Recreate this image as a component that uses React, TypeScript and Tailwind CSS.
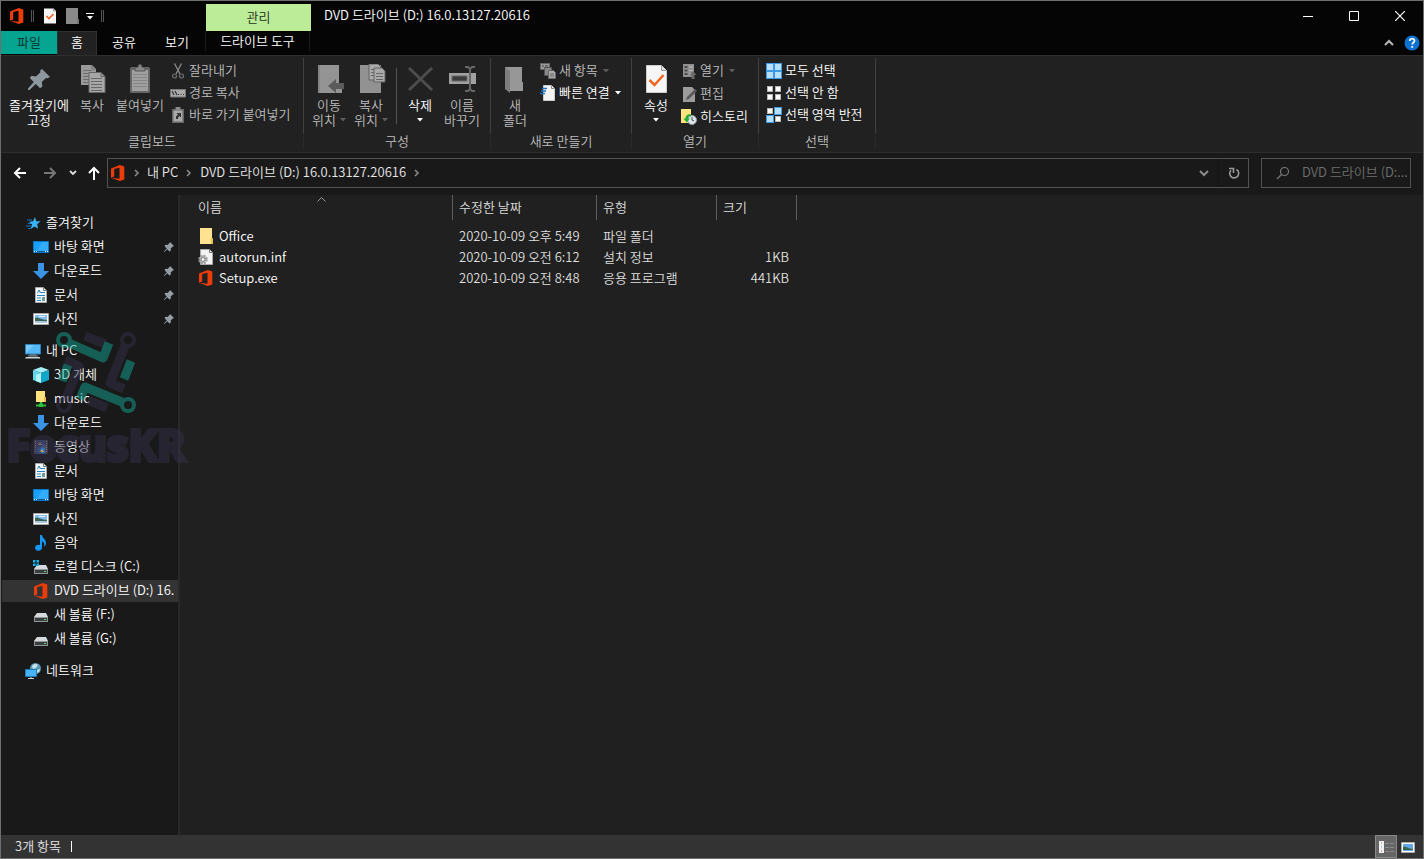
import React from "react";

type P = { className?: string };

const Svg = ({ w = 16, h = 16, children }: { w?: number; h?: number; children: React.ReactNode }) => (
  <svg width={w} height={h} viewBox={`0 0 ${w} ${h}`} fill="none" className="shrink-0" aria-hidden="true">
    {children}
  </svg>
);

/* ---------- shared icons ---------- */

const OfficeIcon = () => (
  <Svg>
    <path d="M1 3.500 9.800.1 14.300 1.400v13.200l-4.500 1.300L1 12.700l8.500 1V2.700L4.200 4v7.500L1 12.700z" fill="#eb3c0a" />
  </Svg>
);

const CheckPage = () => (
  <Svg>
    <path d="M2 .5h9.500L14 3v12.500H2z" fill="#f4f4f4" />
    <path d="M11.500.5V3H14" stroke="#999" />
    <path d="m4.500 8 2.500 2.500L11.500 6" stroke="#f0641e" strokeWidth="1.600" />
  </Svg>
);

const GreyFolder = () => (
  <Svg>
    <path d="M2 0h12v11h1v5H2z" fill="#8a8a8a" />
    <path d="M13 11h2v5h-2z" fill="#777" />
  </Svg>
);

const Caret = ({ className = "" }: P) => (
  <svg width="6" height="4" viewBox="0 0 6 4" className={`shrink-0 ${className}`} aria-hidden="true">
    <path d="M0 0h6L3 3.500z" fill="currentColor" />
  </svg>
);

const Chevron = ({ className = "" }: P) => (
  <svg width="6" height="8" viewBox="0 0 6 8" fill="none" className={`shrink-0 ${className}`} aria-hidden="true">
    <path d="m1 1 3 3-3 3" stroke="#8c8c8c" strokeWidth="1.500" />
  </svg>
);

/* ---------- large ribbon icons ---------- */

const PinLarge = () => (
  <Svg w={32} h={32}>
    <path d="m19 5 8 8-2.500 1.200-1.500-.3-4.200 4.200.6 4.400-2.300 1.700-4.300-4.300L6.500 26H5v-1.500l5.800-6.500-4-4 1.800-2.200 4.300.6L17.400 8.300 17.200 6.600z" fill="#8d979e" />
  </Svg>
);

const CopyLarge = () => (
  <Svg w={32} h={32}>
    <path d="M5 1h11l4 4v16H5z" fill="#9a9a9a" />
    <path d="M16 1v4h4" stroke="#666" />
    <path d="M7 6.500h9M7 9.500h9M7 12.500h9M7 15.500h9M7 18.500h9" stroke="#6d6d6d" />
    <path d="M13 8.500h12l4 4v16H13z" fill="#a6a6a6" stroke="#666" />
    <path d="M25 8.500v4h4" stroke="#666" />
    <path d="M15 14.500h11M15 17.500h11M15 20.500h11M15 23.500h11M15 26.500h11" stroke="#686868" />
  </Svg>
);

const PasteLarge = () => (
  <Svg w={32} h={32}>
    <rect x="6" y="3" width="20" height="26" rx="1.500" fill="#666" />
    <path d="M8 6h16v21H8z" fill="#a0a0a0" />
    <path d="M9 10.500h14M9 13.500h14M9 16.500h14M9 19.500h14M9 22.500h14" stroke="#868686" />
    <path d="M11 7V4l3-1 1-2.500h2L18 3l3 1v3z" fill="#888" stroke="#555" />
  </Svg>
);

const MoveLarge = () => (
  <Svg w={32} h={32}>
    <path d="M5 1h21v19h3v9H5z" fill="#949494" />
    <path d="M5 1h2v28H5z" fill="#858585" />
    <path d="m15 22 8-7v4h8v6h-8v4z" fill="#5b5b5b" />
  </Svg>
);

const CopyToLarge = () => (
  <Svg w={32} h={32}>
    <path d="M5 1h21v28H5z" fill="#929292" />
    <path d="M14 0h9l3 3v13H14z" fill="#aaa" stroke="#626262" />
    <path d="M16 5.500h7M16 8.500h7M16 11.500h7" stroke="#666" />
    <path d="M19 4h8l3 3v11H19z" fill="#aaa" stroke="#626262" />
    <path d="M21 9.500h7M21 12.500h7M21 15.500h7" stroke="#666" />
  </Svg>
);

const DeleteLarge = () => (
  <Svg w={32} h={32}>
    <path d="m5 4 23 22M28 4 5 26" stroke="#4d4d4d" strokeWidth="3" />
  </Svg>
);

const RenameLarge = () => (
  <Svg w={32} h={32}>
    <path d="M3 9h27v11H3z" fill="#a0a0a0" />
    <path d="M6 12h15v5H6z" fill="#3b3b3b" stroke="#6a6a6a" />
    <path d="M19 3h3l2 2 2-2h3M19 27h3l2-2 2 2h3M24 5v20" stroke="#666" strokeWidth="2" />
  </Svg>
);

const NewFolderLarge = () => (
  <Svg w={32} h={32}>
    <path d="M6 3h17v15h1v9H9z" fill="#979797" />
    <path d="M6 3 11 7v22l-5-4z" fill="#7d7d7d" />
  </Svg>
);

const PropsLarge = () => (
  <Svg w={32} h={32}>
    <path d="M6.500 1.500h15l5 5v22h-20z" fill="#f6f6f6" stroke="#ccc" />
    <path d="M21.500 1.500v5h5" fill="#ddd" stroke="#999" />
    <path d="m9.500 16 5 5 9-10" stroke="#f0641e" strokeWidth="2.500" />
  </Svg>
);

/* ---------- small ribbon icons ---------- */

const CutIcon = () => (
  <Svg>
    <path d="M4.500.5 10 11M11.500.5 6 11" stroke="#8a8a8a" strokeWidth="1.300" />
    <circle cx="4.500" cy="13" r="2" stroke="#6e6e6e" strokeWidth="1.200" />
    <circle cx="11.500" cy="13" r="2" stroke="#6e6e6e" strokeWidth="1.200" />
  </Svg>
);

const PathIcon = () => (
  <Svg>
    <path d="M.5 4.500h15v7.500H.5z" fill="#aaa" stroke="#777" />
    <path d="m2 6 2 4M5 6l2 4M8 9.500h1M10.500 9.500h1M13 9.500h1" stroke="#333" strokeWidth="1.200" />
  </Svg>
);

const ShortcutIcon = () => (
  <Svg>
    <path d="M2 2h12v14H2z" fill="#666" />
    <path d="M3.500 3.500h9v11h-9z" fill="#a9a9a9" />
    <path d="M5.500 0h5v3h-5z" fill="#888" />
    <path d="M6 12V9.500l2-2L6.500 6H11v4.500L9.500 9 8 10.500V12z" fill="#333" />
  </Svg>
);

const NewItemIcon = () => (
  <Svg>
    <path d="M.5.500h9v6h-9z" fill="#999" stroke="#666" />
    <path d="M2 3h2M5 3h3" stroke="#444" />
    <path d="M4.500 4.500h7v8h-7z" fill="#888" stroke="#555" />
    <path d="M8.500 7.500h5l2 2v6h-7z" fill="#aaa" stroke="#666" />
    <path d="M10 11h4M10 13h4" stroke="#666" />
  </Svg>
);

const EasyAccessIcon = () => (
  <Svg>
    <path d="M3.500.5h8l3 3v12h-11z" fill="#f4f4f4" stroke="#ccc" />
    <path d="M11.500.5v3h3" stroke="#888" />
    <path d="M2 3.500h5M1 6h5M0 8.500h5" stroke="#1a73c2" strokeWidth="1.400" />
  </Svg>
);

const OpenIcon = () => (
  <Svg>
    <path d="M2 1h11v13H2z" fill="#909090" />
    <path d="M3.500 3h3v2h-3zM3.500 6.500h3v2h-3zM3.500 10h3v2h-3z" fill="#4c4c4c" />
    <path d="M8 4h4M8 7.500h4M8 11h2" stroke="#bbb" />
    <path d="m12 8 3.500 4h-2v4h-3v-4h-2z" fill="#6b6b6b" />
  </Svg>
);

const EditIcon = () => (
  <Svg>
    <path d="M2 1h9l3 3v12H2z" fill="#9c9c9c" />
    <path d="m5 14 1-3 8-8 2 2-8 8z" fill="#5a5a5a" />
  </Svg>
);

const HistoryIcon = () => (
  <Svg>
    <path d="M0 0h10v11h1v3H0z" fill="#ffe381" />
    <circle cx="11" cy="11" r="4.500" fill="#dfe6ea" stroke="#92a0a8" />
    <path d="M11 8v3l2 1" stroke="#445" />
    <path d="M10 5.500C6 4.500 4.500 7.500 4.500 9.500h-2l3.200 4 3.300-4H7C7 7.500 8.500 7 10 7.500z" fill="#26ab37" />
  </Svg>
);

const Tiles = ({ blue }: { blue: boolean[] }) => (
  <Svg>
    {[[0, 0], [8, 0], [0, 8], [8, 8]].map(([x, y], i) =>
      blue[i] ? (
        <g key={i}>
          <path d={`M${x} ${y}h8v8h-8z`} fill="#3a9ae8" />
          <path d={`M${x + 1} ${y + 1}h6v6h-6z`} fill="#b7defa" />
        </g>
      ) : (
        <g key={i}>
          <path d={`M${x + 1} ${y + 1}h6v6h-6z`} fill="#b5b5b5" />
          <path d={`M${x + 2} ${y + 2}h4v4h-4z`} fill="#fff" />
        </g>
      ),
    )}
  </Svg>
);

/* ---------- navigation icons ---------- */

const StarIcon = () => (
  <Svg>
    <path d="M2 5h5M3 8.500h5M1 11h5M3 13.500h3" stroke="#1676c0" />
    <path d="m10 2 1.200 4.200 4.300.1-3.300 2.900.8 4.500-3.400-2.300L5.600 14l1.500-4.500L4 6.700l4-.4z" fill="#39b3f5" />
  </Svg>
);
const DesktopIcon = () => (
  <Svg>
    <path d="M.5 2.500h15v11H.5z" fill="#18a0fb" stroke="#0878c9" />
    <path d="M9 3h6v9H4z" fill="#46b4ff" opacity=".6" />
    <path d="M1 12.500h14" stroke="#075a9b" />
    <path d="M1 12.500h1M3 12.500h1M12 12.500h1M14 12.500h1" stroke="#fff" />
  </Svg>
);
const DownloadIcon = () => (
  <Svg>
    <path d="M5 0h6v8h5l-8 8-8-8h5z" fill="#3994e4" />
  </Svg>
);
const DocIcon = () => (
  <Svg>
    <path d="M2.500.5h8l3 3v12h-11z" fill="#f7f7f7" stroke="#aaa" />
    <path d="M10.500.5v3h3" stroke="#777" />
    <path d="m4.500 6 1.500-3 1.500 3M8 5.500h4M4 8.500h8M4 11h4M4 13.500h4" stroke="#2385c9" />
    <path d="M9 10h3v4H9z" fill="#6f9b95" />
  </Svg>
);
const PictureIcon = () => (
  <Svg>
    <path d="M.5 2.500h15v11H.5z" fill="#fff" stroke="#a5a5a5" />
    <path d="M2 4h12v8H2z" fill="#83bbea" />
    <path d="M2 7c4-1 6 2 12 2v1H2z" fill="#386454" />
    <path d="M2 10h12v2H2z" fill="#a7c6d8" />
    <path d="M6 5.500h6" stroke="#e8f4ff" />
  </Svg>
);
const PcIcon = () => (
  <Svg>
    <path d="M.5 1.500h15v9.500H.5z" fill="#55b9f8" stroke="#2a83bd" />
    <path d="m1 10 8-8H1z" fill="#8dd3ff" opacity=".6" />
    <path d="M5 12h6M3 13h10" stroke="#8a979f" />
    <path d="M1 14h14v1.500H0z" fill="#c9d2d7" />
  </Svg>
);
const CubeIcon = () => (
  <Svg>
    <path d="m8 0 8 3-8 3-8-3z" fill="#a6eef5" />
    <path d="m0 3 8 3v10l-8-3z" fill="#5edbe8" />
    <path d="m16 3-8 3v10l8-3z" fill="#0fa6c8" />
    <path d="m3 8 5-2v10l-5-2z" fill="#b5f4f7" />
  </Svg>
);
const MusicFolderIcon = () => (
  <Svg>
    <path d="M3 0h9v7h1v4H3z" fill="#ffe381" />
    <path d="M11 6h2v5h-2z" fill="#e9bb4a" />
    <path d="M8 11v3M3 14.500h10" stroke="#2cc13b" strokeWidth="2" />
    <path d="M6 12.500h4V16H6z" fill="#2cc13b" />
  </Svg>
);
const VideoIcon = () => (
  <Svg>
    <path d="M1 1h14v14H1z" fill="#4a4a4a" />
    <path d="M2.500 2v12M13.500 2v12" stroke="#999" strokeDasharray="1 1" />
    <path d="M4 1.500h8v6H4z" fill="#3f4d91" />
    <path d="M4 8.500h8v6H4z" fill="#2f6dc0" />
    <path d="m5 6 2-3 2 3zM6 13l3-3 2 3z" fill="#d0a64a" />
  </Svg>
);
const NoteIcon = () => (
  <Svg>
    <path d="M7 0h2c0 3 4 4 4 8 0 2-1 3-2 4 1-4-.5-5-2-5.500V12.500A3.500 3 0 1 1 7 10z" fill="#1496f2" />
  </Svg>
);
const DriveIcon = ({ windows = false }: { windows?: boolean }) => (
  <Svg>
    <path d="M4 6h9l2 4H1z" fill="#d7dadd" />
    <path d="M1 10h14v5H1z" fill="#8f9498" />
    <path d="M2 11h12v3H2z" fill="#3b3e41" />
    <path d="M11 12h2v1h-2z" fill="#45e05a" />
    {windows && <path d="M0 1h2.500v2.500H0zM3.500 1H6v2.500H3.500zM0 4.500h2.500V7H0zM3.500 4.500H6V7H3.500z" fill="#17b4ee" />}
  </Svg>
);
const NetworkIcon = () => (
  <Svg>
    <circle cx="10.500" cy="5.500" r="5.500" fill="#5a9ab5" />
    <path d="M7 3c2-3 5-2 6-1l-2 3-3 1zM12 7l3-1c0 2-1 3-3 4z" fill="#c4e2e8" />
    <path d="M.5 6.500h11v7H.5z" fill="#48b3fb" stroke="#1f7ab8" />
    <path d="M6 14v1M3 15.500h6" stroke="#c9d2d7" />
  </Svg>
);
const PinSmall = () => (
  <svg width="12" height="12" viewBox="0 0 12 12" className="shrink-0" aria-hidden="true">
    <path d="m7 1 4 4-1.500.7L7.700 7.500l.2 2-1.400 1L4.200 8.200 1.500 11H1v-.5l2.700-3L1.500 5l1-1.300 2 .2L6.500 2z" fill="#949ea5" />
  </svg>
);
const FolderIcon = () => (
  <Svg>
    <path d="M2 0h12v10h1v6H2z" fill="#ffe391" />
    <path d="M13 10h2v6h-2z" fill="#e6bd55" />
  </Svg>
);
const InfIcon = () => (
  <Svg>
    <path d="M2.500.5h9l3 3v12h-12z" fill="#f3f3f3" stroke="#aaa" />
    <path d="M11.500.5v3h3" stroke="#777" />
    <circle cx="5" cy="10.500" r="3.500" fill="#ccc" stroke="#999" strokeWidth="2.500" strokeDasharray="1.800 .95" />
    <circle cx="5" cy="10.500" r="2" fill="#eee" stroke="#888" />
  </Svg>
);

/* ---------- ribbon pieces ---------- */

const Big = ({ icon, lines, width, on = false, caret = "none" }: {
  icon: React.ReactNode; lines: string[]; width: string; on?: boolean; caret?: "none" | "inline" | "below";
}) => (
  <button className={`flex shrink-0 flex-col items-center leading-[15px] ${width} ${on ? "text-white" : "text-[#bdbdbd]"}`}>
    {icon}
    <span className="mt-px whitespace-nowrap">{lines[0]}</span>
    {lines[1] && (
      <span className="flex items-center gap-1 whitespace-nowrap">
        {lines[1]}
        {caret === "inline" && <Caret className="text-[#5d5d5d]" />}
      </span>
    )}
    {caret === "below" && <Caret className="mt-1.5" />}
  </button>
);

const Small = ({ icon, label, on = false, caret = false }: {
  icon: React.ReactNode; label: string; on?: boolean; caret?: boolean;
}) => (
  <button className={`flex h-[22px] items-center gap-[3px] whitespace-nowrap ${on ? "text-white" : "text-[#bdbdbd]"}`}>
    {icon}
    <span className="pb-0.5">{label}</span>
    {caret && <Caret className={on ? "ml-0.5" : "ml-0.5 text-[#5d5d5d]"} />}
  </button>
);

const Group = ({ label, width, children }: { label: string; width: string; children: React.ReactNode }) => (
  <section aria-label={label} className={`flex shrink-0 ${width}`}>
    <div className="flex min-w-0 flex-1 flex-col">
      <div className="flex h-[76px] items-start pt-2">{children}</div>
      <div className="text-center leading-[18px] text-[#bdbdbd]">{label}</div>
    </div>
    <div className="mt-0.5 flex w-px flex-col">
      <div className="h-[75px] bg-[#414141]" />
      <div className="h-4 bg-[#2a2a2a]" />
    </div>
  </section>
);

/* ---------- data ---------- */

type NavItem = { icon: React.ReactNode; label: string; pinned?: boolean; selected?: boolean };
type NavGroup = { icon: React.ReactNode; label: string; items: NavItem[] };

const nav: NavGroup[] = [
  {
    icon: <StarIcon />, label: "즐겨찾기", items: [
      { icon: <DesktopIcon />, label: "바탕 화면", pinned: true },
      { icon: <DownloadIcon />, label: "다운로드", pinned: true },
      { icon: <DocIcon />, label: "문서", pinned: true },
      { icon: <PictureIcon />, label: "사진", pinned: true },
    ],
  },
  {
    icon: <PcIcon />, label: "내 PC", items: [
      { icon: <CubeIcon />, label: "3D 개체" },
      { icon: <MusicFolderIcon />, label: "music" },
      { icon: <DownloadIcon />, label: "다운로드" },
      { icon: <VideoIcon />, label: "동영상" },
      { icon: <DocIcon />, label: "문서" },
      { icon: <DesktopIcon />, label: "바탕 화면" },
      { icon: <PictureIcon />, label: "사진" },
      { icon: <NoteIcon />, label: "음악" },
      { icon: <DriveIcon windows />, label: "로컬 디스크 (C:)" },
      { icon: <OfficeIcon />, label: "DVD 드라이브 (D:) 16.", selected: true },
      { icon: <DriveIcon />, label: "새 볼륨 (F:)" },
      { icon: <DriveIcon />, label: "새 볼륨 (G:)" },
    ],
  },
  { icon: <NetworkIcon />, label: "네트워크", items: [] },
];

const files = [
  { icon: <FolderIcon />, name: "Office", date: "2020-10-09 오후 5:49", type: "파일 폴더", size: "" },
  { icon: <InfIcon />, name: "autorun.inf", date: "2020-10-09 오전 6:12", type: "설치 정보", size: "1KB" },
  { icon: <OfficeIcon />, name: "Setup.exe", date: "2020-10-09 오전 8:48", type: "응용 프로그램", size: "441KB" },
];

/* ---------- regions ---------- */

const TitleBar = () => (
  <header className="flex h-[30px] shrink-0 items-stretch bg-[#050505]">
    <div className="flex w-[205px] shrink-0 items-center pl-2">
      <OfficeIcon />
      <span className="ml-1.5 h-3 w-[3px] border-x border-[#555]" />
      <button aria-label="속성" className="ml-2"><CheckPage /></button>
      <button aria-label="새 폴더" className="ml-1.5"><GreyFolder /></button>
      <button aria-label="빠른 실행 도구 모음 사용자 지정" className="ml-1.5 flex flex-col items-center gap-0.5 text-white">
        <span className="h-px w-2 bg-white" />
        <Caret />
      </button>
      <span className="ml-[7px] h-3 w-[3px] border-x border-[#555]" />
    </div>
    <div className="mt-[3px] w-[105px] shrink-0 bg-[#bdec98] text-center leading-[25px] text-[#20301a]">관리</div>
    <h1 className="ml-[13px] flex-1 truncate leading-[28px] text-white">DVD 드라이브 (D:) 16.0.13127.20616</h1>
    <button aria-label="최소화" className="flex w-[46px] items-center justify-center">
      <Svg w={10} h={10}><path d="M0 5.500h10" stroke="#fff" /></Svg>
    </button>
    <button aria-label="최대화" className="flex w-[46px] items-center justify-center">
      <Svg w={10} h={10}><path d="M.5.500h9v9h-9z" stroke="#fff" /></Svg>
    </button>
    <button aria-label="닫기" className="flex w-[46px] items-center justify-center">
      <Svg w={10} h={10}><path d="m0 0 10 10M10 0 0 10" stroke="#fff" strokeWidth="1.200" /></Svg>
    </button>
  </header>
);

const Tabs = () => (
  <div className="flex h-6 shrink-0 items-stretch bg-[#050505] leading-5 text-white">
    <button className="mb-px w-14 bg-[#06a592] pb-0.5 text-[#052a24]">파일</button>
    <button className="-mb-px w-10 border-x border-t border-[#303030] bg-[#212121] pb-1">홈</button>
    <button className="w-[54px] pb-0.5">공유</button>
    <button className="mr-0.5 w-[52px] pb-0.5">보기</button>
    <button className="mb-1 w-[105px] border-x border-[#1c1c1c]">드라이브 도구</button>
    <div className="ml-auto flex items-center gap-2.5 pr-[3px]">
      <button aria-label="리본 최소화">
        <Svg w={10} h={8}><path d="m1 6 4-4 4 4" stroke="#b8b8b8" strokeWidth="2" /></Svg>
      </button>
      <button aria-label="도움말">
        <Svg>
          <circle cx="8" cy="8" r="7.500" fill="#0a72d1" />
          <path d="M5.700 6c0-3 4.800-3 4.800-.2 0 1.800-2.300 1.800-2.300 3.700" stroke="#fff" strokeWidth="1.700" />
          <path d="M7.300 11h1.800v1.800H7.300z" fill="#fff" />
        </Svg>
      </button>
    </div>
  </div>
);

const Ribbon = () => (
  <div className="flex h-[98px] shrink-0 overflow-hidden border-y border-[#2e2e2e] bg-[#212121]">
    <Group label="클립보드" width="w-[303px]">
      <div className="flex pl-[7px]">
        <Big icon={<PinLarge />} lines={["즐겨찾기에", "고정"]} width="w-[62px]" on />
        <Big icon={<CopyLarge />} lines={["복사"]} width="w-11" />
        <Big icon={<PasteLarge />} lines={["붙여넣기"]} width="w-[52px]" />
      </div>
      <div className="-mt-1 flex flex-col pl-1">
        <Small icon={<CutIcon />} label="잘라내기" />
        <Small icon={<PathIcon />} label="경로 복사" />
        <Small icon={<ShortcutIcon />} label="바로 가기 붙여넣기" />
      </div>
    </Group>
    <Group label="구성" width="w-[187px]">
      <div className="flex pl-1">
        <Big icon={<MoveLarge />} lines={["이동", "위치"]} width="w-[42px]" caret="inline" />
        <Big icon={<CopyToLarge />} lines={["복사", "위치"]} width="w-[42px]" caret="inline" />
        <span className="ml-1 mt-1 h-14 w-px bg-[#555]" />
        <Big icon={<DeleteLarge />} lines={["삭제"]} width="w-[46px]" on caret="below" />
        <Big icon={<RenameLarge />} lines={["이름", "바꾸기"]} width="w-[38px]" />
      </div>
    </Group>
    <Group label="새로 만들기" width="w-[141px]">
      <div className="pl-0.5">
        <Big icon={<NewFolderLarge />} lines={["새", "폴더"]} width="w-11" />
      </div>
      <div className="-mt-1 flex flex-col pl-[3px]">
        <Small icon={<NewItemIcon />} label="새 항목" caret />
        <Small icon={<EasyAccessIcon />} label="빠른 연결" on caret />
      </div>
    </Group>
    <Group label="열기" width="w-[127px]">
      <div className="pl-0.5">
        <Big icon={<PropsLarge />} lines={["속성"]} width="w-11" on caret="below" />
      </div>
      <div className="-mt-1 flex flex-col gap-px pl-[3px]">
        <Small icon={<OpenIcon />} label="열기" caret />
        <Small icon={<EditIcon />} label="편집" />
        <Small icon={<HistoryIcon />} label="히스토리" on />
      </div>
    </Group>
    <Group label="선택" width="w-[117px]">
      <div className="-mt-1 flex flex-col pl-[7px]">
        <Small icon={<Tiles blue={[true, true, true, true]} />} label="모두 선택" on />
        <Small icon={<Tiles blue={[false, false, false, false]} />} label="선택 안 함" on />
        <Small icon={<Tiles blue={[false, true, true, false]} />} label="선택 영역 반전" on />
      </div>
    </Group>
  </div>
);

const AddressRow = () => (
  <div className="flex h-[42px] shrink-0 items-start gap-3 bg-[#191919] pr-3 pt-[5px]">
    <div className="flex min-w-0 flex-1 items-center">
      <div className="flex w-[106px] shrink-0 items-center pl-3">
        <button aria-label="뒤로">
          <Svg w={14} h={14}><path d="M13 7H2M7 2 2 7l5 5" stroke="#fff" strokeWidth="2" /></Svg>
        </button>
        <button aria-label="앞으로" className="ml-4">
          <Svg w={14} h={14}><path d="M1 7h11M7 2l5 5-5 5" stroke="#777" strokeWidth="2" /></Svg>
        </button>
        <button aria-label="최근 위치" className="ml-3">
          <Svg w={8} h={6}><path d="m1 1 3 3 3-3" stroke="#ddd" strokeWidth="1.800" /></Svg>
        </button>
        <button aria-label="위로" className="ml-2.5">
          <Svg w={14} h={14}><path d="M7 14V2M2 7l5-5 5 5" stroke="#fff" strokeWidth="2" /></Svg>
        </button>
      </div>
      <nav aria-label="주소" className="flex h-[30px] min-w-0 flex-1 items-center border border-[#535353] pl-0.5 text-[#e8e8e8]">
        <OfficeIcon />
        <Chevron className="ml-2" />
        <a href="#pc" className="ml-[7px] whitespace-nowrap pb-0.5">내 PC</a>
        <Chevron className="ml-2" />
        <a href="#dvd" className="ml-2 truncate pb-0.5">DVD 드라이브 (D:) 16.0.13127.20616</a>
        <Chevron className="ml-2" />
        <button aria-label="이전 위치" className="ml-auto">
          <Svg w={10} h={8}><path d="m1 2 4 4 4-4" stroke="#8c8c8c" strokeWidth="2" /></Svg>
        </button>
        <span className="ml-[9px] h-7 w-px bg-[#151515]" />
        <button aria-label="새로 고침" className="flex w-[29px] justify-center">
          <Svg w={12} h={12}>
            <path d="M8.500 2.500A4.500 4.500 0 1 1 3 3.200" stroke="#999" strokeWidth="1.600" />
            <path d="M1 1.500h4.500V6" stroke="#999" strokeWidth="1.600" />
          </Svg>
        </button>
      </nav>
    </div>
    <label className="flex h-[30px] w-[150px] shrink-0 items-center gap-3 border border-[#535353] pl-3.5">
      <Svg w={14} h={14}>
        <circle cx="8.500" cy="5.500" r="4" stroke="#777" strokeWidth="1.200" />
        <path d="M5.500 8.500 1 13" stroke="#777" strokeWidth="1.200" />
      </Svg>
      <input
        aria-label="검색"
        placeholder="DVD 드라이브 (D:..."
        className="min-w-0 flex-1 bg-transparent pb-0.5 text-[#ddd] outline-none placeholder:text-[#6f6f6f]"
      />
    </label>
  </div>
);

const Watermark = () => (
  <div aria-hidden="true" className="pointer-events-none absolute left-1 top-[136px] flex w-[182px] flex-col items-center opacity-50">
    <svg width="82" height="84" viewBox="0 0 82 84" fill="none">
      <g stroke="#34304a">
        <circle cx="73" cy="9" r="6" strokeWidth="4" />
        <circle cx="9" cy="74" r="6" strokeWidth="4" />
        <path d="M70 15 55 52l14 6" strokeWidth="9" strokeLinejoin="round" />
        <path d="m11 68 13-33-14-6" strokeWidth="9" strokeLinejoin="round" />
        <path d="m30 5 20 8M33 69l19 8" strokeWidth="9" />
      </g>
      <g stroke="#12a593">
        <circle cx="9" cy="9" r="6" strokeWidth="4" />
        <circle cx="73" cy="74" r="6" strokeWidth="4" />
        <path d="m14 12 34 15 6-15" strokeWidth="9" strokeLinejoin="round" />
        <path d="M67 71 30 56l-5 12" strokeWidth="9" strokeLinejoin="round" />
        <path d="m76 30-7 18M13 34 7 50" strokeWidth="9" />
      </g>
    </svg>
    <span className="mt-1.5 whitespace-nowrap font-['Open_Sans',sans-serif] text-[43px] font-bold leading-[48px] text-[#34304a] [-webkit-text-stroke:4px_#34304a] [stroke-linejoin:round]">
      FocusKR
    </span>
  </div>
);

const NavRow = ({ item, root = false }: { item: NavItem; root?: boolean }) => (
  <a
    href="#nav"
    className={`mb-0.5 ml-px flex h-[22px] items-center gap-[5px] pr-[3px] text-white ${root ? "pl-[23px]" : "pl-[31px]"} ${item.selected ? "bg-[#333]" : ""}`}
  >
    {item.icon}
    <span className="min-w-0 flex-1 whitespace-nowrap pb-0.5">{item.label}</span>
    {item.pinned && <PinSmall />}
  </a>
);

const Sidebar = () => (
  <aside className="relative w-[179px] shrink-0 border-r-2 border-[#292929] bg-[#191919]">
    <nav aria-label="탐색 창" className="flex flex-col gap-2 pt-[17px]">
      {nav.map((g) => (
        <div key={g.label}>
          <NavRow item={g} root />
          {g.items.map((it) => <NavRow key={it.label} item={it} />)}
        </div>
      ))}
    </nav>
    <Watermark />
  </aside>
);

const FileTable = () => (
  <main className="min-w-0 flex-1 bg-[#202020]">
    <table className="w-[617px] table-fixed border-separate border-spacing-0 text-left text-[#dedede]">
      <colgroup>
        <col className="w-[273px]" />
        <col className="w-36" />
        <col className="w-[120px]" />
        <col className="w-20" />
      </colgroup>
      <thead>
        <tr className="h-[25px] align-top leading-[23px]">
          <th className="relative border-r border-[#5f5f5f] p-0 pl-[18px] font-[350]">
            이름
            <svg width="9" height="5" viewBox="0 0 9 5" fill="none" className="absolute left-1/2 top-0.5 ml-px" aria-hidden="true">
              <path d="m.5 4.500 4-4 4 4" stroke="#999" />
            </svg>
          </th>
          <th className="border-r border-[#5f5f5f] p-0 pl-1.5 font-[350]">수정한 날짜</th>
          <th className="border-r border-[#5f5f5f] p-0 pl-1.5 font-[350]">유형</th>
          <th className="border-r border-[#5f5f5f] p-0 pl-1.5 font-[350]">크기</th>
        </tr>
      </thead>
      <tbody>
        <tr className="h-[5px]"><td colSpan={4} className="p-0" /></tr>
        {files.map((f) => (
          <tr key={f.name} className="h-[21px] leading-[21px]">
            <td className="p-0 pl-[18px]">
              <a href="#file" className="flex items-center gap-[5px] text-white">{f.icon}{f.name}</a>
            </td>
            <td className="p-0 pl-1.5">{f.date}</td>
            <td className="p-0 pl-1.5">{f.type}</td>
            <td className="p-0 pr-2 text-right">{f.size}</td>
          </tr>
        ))}
      </tbody>
    </table>
  </main>
);

const StatusBar = () => (
  <footer className="flex h-[23px] shrink-0 items-center bg-[#333] pl-3.5 text-[#e4e4e4]">
    <span className="pb-0.5">3개 항목</span>
    <span className="ml-2.5 h-[11px] w-px bg-white" />
    <div className="ml-auto flex items-center gap-1 pr-2">
      <button aria-label="자세히" className="flex h-[23px] w-[22px] items-center justify-center border border-[#888] bg-[#666]">
        <Svg>
          <path d="M1 2h5v12H1z" fill="#eee" />
          <path d="M2 3h3v2H2zM2 7h3v2H2zM2 11h3v2H2z" fill="#fff" />
          <path d="M3 4h1" stroke="#365" /><path d="M3 8h1" stroke="#28c" /><path d="M3 12h1" stroke="#c22" />
          <path d="M7 4.500h4M12 4.500h4M7 8.500h4M12 8.500h4M7 12.500h4M12 12.500h4" stroke="#8a8a8a" />
        </Svg>
      </button>
      <button aria-label="큰 아이콘"><Svg w={14} h={12}>
        <path d="M.5 1.500h13v10H.5z" fill="#fff" stroke="#aaa" />
        <path d="M2 3h10v7H2z" fill="#63a9ea" />
        <path d="M2 6c4-1 5 2 10 2v1H2z" fill="#386454" />
      </Svg></button>
    </div>
  </footer>
);

export default function App() {
  return (
    <div className="flex min-h-screen flex-col border border-[#6e6e6e] bg-[#191919] font-['Noto_Sans_CJK_KR',sans-serif] text-[13px] font-[350] leading-5">
      <TitleBar />
      <Tabs />
      <Ribbon />
      <AddressRow />
      <div className="flex flex-1">
        <Sidebar />
        <FileTable />
      </div>
      <StatusBar />
    </div>
  );
}
